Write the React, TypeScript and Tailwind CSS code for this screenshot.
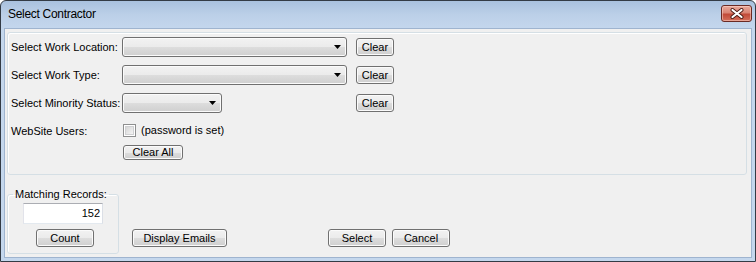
import React from "react";

const btn =
  "flex items-center justify-center border border-[#707070] rounded-[3px] bg-[linear-gradient(#f2f2f2_0%,#ebebeb_50%,#dddddd_51%,#cfcfcf_100%)] shadow-[inset_0_0_0_1px_#fbfbfb] text-[11px] leading-none text-black";

function Arrow() {
  return (
    <svg width="7" height="4" viewBox="0 0 7 4">
      <path d="M0 0H7L3.5 4Z" fill="#000" />
    </svg>
  );
}

function Combo({ wide }: { wide: boolean }) {
  return (
    <div
      className={
        (wide ? "w-[225px] " : "w-[100px] ") +
        "h-[20px] flex items-center justify-end pr-[5px] border border-[#707070] rounded-[3px] bg-[linear-gradient(#f2f2f2_0%,#ebebeb_50%,#dddddd_51%,#cfcfcf_100%)] shadow-[inset_0_0_0_1px_#fbfbfb]"
      }
    >
      <Arrow />
    </div>
  );
}

function Row({ label, wide }: { label: string; wide: boolean }) {
  return (
    <div className="flex items-center h-[20px]">
      <div className="w-[111px]">{label}</div>
      <div className="w-[234px] flex">
        <Combo wide={wide} />
      </div>
      <div className={btn + " w-[38px] h-[18px]"}>Clear</div>
    </div>
  );
}

export default function App() {
  return (
    <div className="w-[756px] h-[262px] flex flex-col border border-[#333b45] rounded-t-[6px] bg-[linear-gradient(#a9c1de_0px,#bcd0e8_14px,#c4d7ed_28px,#c4d7ed_100%)] font-['Liberation_Sans',Arial,sans-serif] text-[11px] text-black overflow-hidden">
      {/* title bar */}
      <div className="h-[27px] flex items-center pl-[7px] pr-[3px]">
        <div className="text-[12px] tracking-[-0.3px] text-black flex-1 mt-[-1px]">Select Contractor</div>
        <div className="self-start mt-[4px] w-[31px] h-[17px] rounded-[3px] border border-[#6a2a24] bg-[linear-gradient(#e9a99b_0%,#d98474_45%,#c24a38_55%,#d4705c_100%)] shadow-[inset_0_0_0_1px_rgba(255,220,210,0.5)] flex items-center justify-center">
          <svg width="14" height="11" viewBox="0 0 14 11">
            <path d="M2.5 2L11.5 9M11.5 2L2.5 9" stroke="#4a1a14" strokeWidth="4" strokeLinecap="round" />
            <path d="M2.5 2L11.5 9M11.5 2L2.5 9" stroke="#ffffff" strokeWidth="2.2" strokeLinecap="round" />
          </svg>
        </div>
      </div>
      {/* client */}
      <div className="flex-1 mx-[3px] mb-[3px] border border-[#9fb4cf] bg-[#f0f0f0] flex flex-col">
        {/* top panel */}
        <div className="ml-[2px] mr-[4px] mt-[3px] h-[143px] border border-[#d5dfe5] rounded-[3px] shadow-[inset_1px_1px_0_#ffffff] pl-[3px] pt-[4px] flex flex-col">
          <Row label="Select Work Location:" wide={true} />
          <div className="h-[8px]" />
          <Row label="Select Work Type:" wide={true} />
          <div className="h-[8px]" />
          <Row label="Select Minority Status:" wide={false} />
          <div className="mt-[7px] h-[20px] flex items-center">
            <div className="w-[111px] mt-[2px]">WebSite Users:</div>
            <div className="ml-[1px] w-[13px] h-[13px] border border-[#8e8f8f] bg-white p-[1px]">
              <div className="w-full h-full border border-[#cfd0d2] bg-[linear-gradient(135deg,#d6d6d6,#f4f4f4)]" />
            </div>
            <div className="ml-[5px]">(password is set)</div>
          </div>
          <div className="mt-[5px] ml-[112px]">
            <div className={btn + " w-[60px] h-[15px]"}>Clear All</div>
          </div>
        </div>
        {/* bottom area */}
        <div className="flex items-end mt-[13px] ml-[2px]">
          <fieldset className="w-[112px] border border-[#d5dfe5] rounded-[3px] shadow-[inset_1px_1px_0_#ffffff] pb-[6px]">
            <legend className="ml-[5px] px-[2px] leading-[13px]">Matching Records:</legend>
            <div className="mt-[2px] ml-[15px] w-[80px] h-[21px] bg-white border border-[#abadb3] border-l-[#e2e3ea] border-r-[#dbdfe6] border-b-[#e3e9ef] flex items-center justify-end pr-[2px]">
              152
            </div>
            <div className="mt-[5px] ml-[28px]">
              <div className={btn + " w-[58px] h-[18px]"}>Count</div>
            </div>
          </fieldset>
          <div className="mb-[7px] ml-[13px]">
            <div className={btn + " w-[95px] h-[18px]"}>Display Emails</div>
          </div>
          <div className="mb-[7px] ml-[101px]">
            <div className={btn + " w-[58px] h-[18px]"}>Select</div>
          </div>
          <div className="mb-[7px] ml-[6px]">
            <div className={btn + " w-[58px] h-[18px]"}>Cancel</div>
          </div>
        </div>
      </div>
    </div>
  );
}
